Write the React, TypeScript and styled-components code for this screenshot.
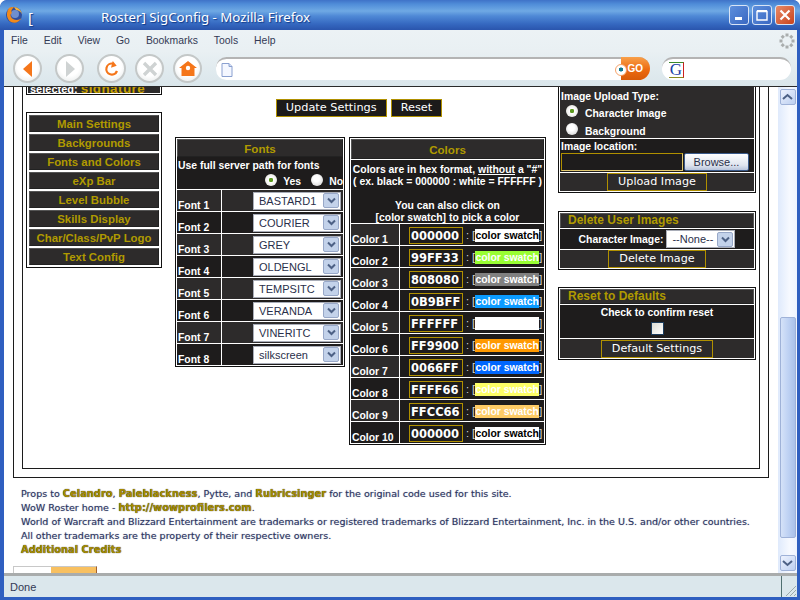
import React from 'react';
import styled, { createGlobalStyle } from 'styled-components';

const fontRows = ['BASTARD1', 'COURIER', 'GREY', 'OLDENGL', 'TEMPSITC', 'VERANDA', 'VINERITC', 'silkscreen'];

const colorRows = [
  { value: '000000', color: '#ffffff', text: '#000000' },
  { value: '99FF33', color: '#99ff33', text: '#ffffff' },
  { value: '808080', color: '#808080', text: '#ffffff' },
  { value: '0B9BFF', color: '#0b9bff', text: '#ffffff' },
  { value: 'FFFFFF', color: '#ffffff', text: '#ffffff' },
  { value: 'FF9900', color: '#ff9900', text: '#ffffff' },
  { value: '0066FF', color: '#0066ff', text: '#ffffff' },
  { value: 'FFFF66', color: '#ffff66', text: '#ffffff' },
  { value: 'FFCC66', color: '#ffcc66', text: '#ffffff' },
  { value: '000000', color: '#ffffff', text: '#000000' },
];

const navItems = [
  'Main Settings',
  'Backgrounds',
  'Fonts and Colors',
  'eXp Bar',
  'Level Bubble',
  'Skills Display',
  'Char/Class/PvP Logo',
  'Text Config',
];

const menuItems = ['File', 'Edit', 'View', 'Go', 'Bookmarks', 'Tools', 'Help'];

const ChevronDown = (): React.ReactElement => (
  <svg width="9" height="7" viewBox="0 0 9 7">
    <path d="M1 1.5 L4.5 5 L8 1.5" fill="none" stroke="#4d6185" strokeWidth="2" />
  </svg>
);

const Select = ({ label }: { label: string }): React.ReactElement => (
  <SelectBox>
    <SelectText>{label}</SelectText>
    <SelectArrow>
      <ChevronDown />
    </SelectArrow>
  </SelectBox>
);

const App: React.FunctionComponent = (): React.ReactElement => (
  <Window>
    <GlobalStyle />
    <TitleBar>
      <svg width="18" height="18" viewBox="0 0 18 18">
        <circle cx="9" cy="9" r="8" fill="#2f4f9e" />
        <circle cx="10" cy="8" r="4" fill="#6f8fce" />
        <path d="M4 2 C1 6 1 13 6 16 C10 18 15 16 17 11 C16 14 11 15 8 13 C5 11 5 8 7 7 C6 5 6 4 9 1 C7 1 5 1 4 2 Z" fill="#f08a1c" />
        <path d="M9 1 C13 1 16 4 17 8 C15 5 13 4 11 4 Z" fill="#f6b23c" />
      </svg>
      <TitleLead>[</TitleLead>
      <TitleText>Roster] SigConfig - Mozilla Firefox</TitleText>
      <WindowButtons>
        <WindowButton>
          <svg width="10" height="10" viewBox="0 0 10 10"><rect x="1" y="7" width="7" height="3" fill="#fff" /></svg>
        </WindowButton>
        <WindowButton>
          <svg width="12" height="12" viewBox="0 0 12 12"><path d="M1 2.5H11V11H1Z" fill="none" stroke="#fff" strokeWidth="1.4" /><rect x="1" y="1" width="10" height="2" fill="#fff" /></svg>
        </WindowButton>
        <CloseButton>
          <svg width="12" height="12" viewBox="0 0 12 12"><path d="M1.5 1.5 L10.5 10.5 M10.5 1.5 L1.5 10.5" stroke="#fff" strokeWidth="2.2" /></svg>
        </CloseButton>
      </WindowButtons>
    </TitleBar>

    <MenuBar>
      {menuItems.map((item) => (
        <MenuItem key={item}>{item}</MenuItem>
      ))}
      <Throbber>
        <svg width="16" height="16" viewBox="0 0 16 16">
          {[0, 45, 90, 135, 180, 225, 270, 315].map((a) => (
            <rect key={a} x="6.5" y="0.5" width="3" height="3" fill="#a9adad" transform={`rotate(${a} 8 8)`} />
          ))}
        </svg>
      </Throbber>
    </MenuBar>

    <Toolbar>
      <NavButton $gap={0}>
        <svg width="16" height="18" viewBox="0 0 16 18"><path d="M12 1 L3 9 L12 17 Z" fill="#f5761a" /></svg>
      </NavButton>
      <NavButton $gap={13}>
        <svg width="16" height="18" viewBox="0 0 16 18"><path d="M4 1 L13 9 L4 17 Z" fill="#cfd3d3" /></svg>
      </NavButton>
      <NavButton $gap={13}>
        <svg width="18" height="18" viewBox="0 0 18 18">
          <path d="M14 11 A5.5 5.5 0 1 1 10 3.7" fill="none" stroke="#f5761a" strokeWidth="2.2" />
          <path d="M9 1 L14 4.5 L9 8 Z" fill="#f5761a" transform="rotate(15 9 4)" />
        </svg>
      </NavButton>
      <NavButton $gap={9}>
        <svg width="18" height="18" viewBox="0 0 18 18"><path d="M3 3 L15 15 M15 3 L3 15" stroke="#cfd3d3" strokeWidth="3.4" /></svg>
      </NavButton>
      <NavButton $gap={9}>
        <svg width="20" height="18" viewBox="0 0 20 18">
          <path d="M10 1 L19 8 H16.5 V16 H3.5 V8 H1 Z" fill="#f5761a" />
          <circle cx="10" cy="8" r="2.2" fill="#fff" />
        </svg>
      </NavButton>
      <AddressBar>
        <svg width="12" height="14" viewBox="0 0 12 14">
          <path d="M1 .5H8L11 3.5V13.5H1Z" fill="#f4f7ff" stroke="#8aa0d0" />
          <path d="M8 .5V3.5H11" fill="#d3def5" stroke="#8aa0d0" />
        </svg>
        <GoButton>
          <GoDrop />
          GO
        </GoButton>
      </AddressBar>
      <SearchBar>
        <SearchLogo>
          <SearchLetter>G</SearchLetter>
        </SearchLogo>
      </SearchBar>
    </Toolbar>

    <Viewport>
      <Page>
        <OuterBox>
          <InnerBox>
            <LeftColumn>
              <SelectedBox>
                selected: <SelectedName>signature</SelectedName>
              </SelectedBox>
              <NavBox>
                {navItems.map((item) => (
                  <NavItem key={item}>{item}</NavItem>
                ))}
              </NavBox>
            </LeftColumn>

            <MiddleColumn>
              <ActionRow>
                <ActionButton>Update Settings</ActionButton>
                <ActionButton>Reset</ActionButton>
              </ActionRow>
              <PanelRow>
                <FontsPanel>
                  <PanelHeader $height={18}>Fonts</PanelHeader>
                  <FontsIntro>
                    Use full server path for fonts
                    <RadioLine>
                      <Radio $checked />
                      <RadioCaption>Yes</RadioCaption>
                      <Radio />
                      <RadioCaption>No</RadioCaption>
                    </RadioLine>
                  </FontsIntro>
                  {fontRows.map((name, index) => (
                    <FontRow key={name} $odd={index % 2 === 0}>
                      <RowLabel>Font {index + 1}</RowLabel>
                      <FontCell>
                        <Select label={name} />
                      </FontCell>
                    </FontRow>
                  ))}
                </FontsPanel>

                <ColorsPanel>
                  <PanelHeader $height={20}>Colors</PanelHeader>
                  <ColorsIntro>
                    Colors are in hex format, <u>without</u> a &quot;#&quot;
                    <br />( ex. black = 000000 : white = FFFFFF )
                    <br />
                    <br />
                    You can also click on
                    <br />
                    [color swatch] to pick a color
                  </ColorsIntro>
                  {colorRows.map((row, index) => (
                    <ColorRow key={index} $odd={index % 2 === 0}>
                      <ColorLabel>Color {index + 1}</ColorLabel>
                      <ColorCell>
                        <HexInput>{row.value}</HexInput>
                        <SwatchLink>
                          : [
                          <Swatch style={{ background: row.color, color: row.text }}>color swatch</Swatch>]
                        </SwatchLink>
                      </ColorCell>
                    </ColorRow>
                  ))}
                </ColorsPanel>
              </PanelRow>
            </MiddleColumn>

            <RightColumn>
              <SidePanel $top={0}>
                <UploadTypes>
                  Image Upload Type:
                  <UploadOptions>
                    <UploadOption>
                      <UploadRadio $checked />
                      Character Image
                    </UploadOption>
                    <UploadOption>
                      <UploadRadio />
                      Background
                    </UploadOption>
                  </UploadOptions>
                </UploadTypes>
                <LocationRow>
                  Image location:
                  <FileLine>
                    <FileInput />
                    <BrowseButton>Browse...</BrowseButton>
                  </FileLine>
                </LocationRow>
                <ButtonRow $height={19}>
                  <GoldButton>Upload Image</GoldButton>
                </ButtonRow>
              </SidePanel>

              <SidePanel $top={18}>
                <SideHeader>Delete User Images</SideHeader>
                <DeleteRow>
                  Character Image:
                  <SmallSelect>
                    <SelectText>--None--</SelectText>
                    <SelectArrow>
                      <ChevronDown />
                    </SelectArrow>
                  </SmallSelect>
                </DeleteRow>
                <ButtonRow $height={19}>
                  <GoldButton>Delete Image</GoldButton>
                </ButtonRow>
              </SidePanel>

              <SidePanel $top={17}>
                <SideHeader>Reset to Defaults</SideHeader>
                <ConfirmRow>
                  Check to confirm reset
                  <CheckBox />
                </ConfirmRow>
                <ButtonRow $height={20}>
                  <GoldButton>Default Settings</GoldButton>
                </ButtonRow>
              </SidePanel>
            </RightColumn>
          </InnerBox>
        </OuterBox>

        <Footer>
          <FooterLine>
            Props to <FooterLink>Celandro</FooterLink>, <FooterLink>Paleblackness</FooterLink>, Pytte, and{' '}
            <FooterLink>Rubricsinger</FooterLink> for the original code used for this site.
          </FooterLine>
          <FooterLine>
            WoW Roster home - <FooterLink>http://wowprofilers.com</FooterLink>.
          </FooterLine>
          <FooterLine>
            World of Warcraft and Blizzard Entertainment are trademarks or registered trademarks of Blizzard Entertainment, Inc. in the U.S. and/or other countries.
          </FooterLine>
          <FooterLine>All other trademarks are the property of their respective owners.</FooterLine>
          <FooterLine>
            <FooterLink>Additional Credits</FooterLink>
          </FooterLine>
        </Footer>
        <Badge>
          <BadgeEnd />
        </Badge>
      </Page>

      <ScrollBar>
        <ScrollButton>
          <svg width="11" height="8" viewBox="0 0 11 8"><path d="M1 6 L5.5 2 L10 6" fill="none" stroke="#4d6185" strokeWidth="2" /></svg>
        </ScrollButton>
        <ScrollTrack>
          <ScrollThumb />
        </ScrollTrack>
        <ScrollButton>
          <svg width="11" height="8" viewBox="0 0 11 8"><path d="M1 2 L5.5 6 L10 2" fill="none" stroke="#4d6185" strokeWidth="2" /></svg>
        </ScrollButton>
      </ScrollBar>
    </Viewport>

    <StatusBar>
      <StatusText>Done</StatusText>
      <Grip>
        <svg width="14" height="14" viewBox="0 0 14 14">
          <path d="M13 3 L3 13 M13 7 L7 13 M13 11 L11 13" stroke="#9aa8aa" strokeWidth="1" />
        </svg>
      </Grip>
    </StatusBar>
  </Window>
);

export default App;

// Global

const GlobalStyle = createGlobalStyle`
  html, body {
    margin: 0;
    padding: 0;
    background: #fff;
    overflow: hidden;
  }
`;

// Browser chrome

const Window = styled('div')`
  box-sizing: border-box;
  display: flex;
  flex-direction: column;
  width: 800px;
  height: 600px;
  overflow: hidden;
  background: #2f5fc0;
  border-radius: 7px 7px 0 0;
  padding: 0 3px 3px 4px;
  font-family: "Noto Sans", sans-serif;
`;

const TitleBar = styled('div')`
  display: flex;
  align-items: center;
  flex: none;
  height: 30px;
  margin: 0 -3px 0 -4px;
  padding: 0 5px;
  background: linear-gradient(#3f72c8 0, #4f8cd8 4px, #6fa9e4 11px, #4f89d6 16px, #3568c0 24px, #2a55ad 30px);
  border-radius: 7px 7px 0 0;
`;

const TitleLead = styled('span')`
  margin: 3px 0 0 5px;
  width: 73px;
  color: #fff;
  font-size: 15px;
  text-shadow: 1px 1px 1px #123a88;
`;

const TitleText = styled('span')`
  flex: 1;
  margin-top: 3px;
  color: #fff;
  font-size: 13.3px;
  text-shadow: 1px 1px 1px #123a88;
`;

const WindowButtons = styled('div')`
  display: flex;
  gap: 3px;
`;

const WindowButton = styled('div')`
  display: flex;
  align-items: center;
  justify-content: center;
  box-sizing: border-box;
  width: 20px;
  height: 20px;
  border: 1px solid #d8e4f6;
  border-radius: 3px;
  background: linear-gradient(135deg, #5d8fdc, #3a68c2);
`;

const CloseButton = styled(WindowButton)`
  background: linear-gradient(135deg, #e88a68, #c8431c);
`;

const MenuBar = styled('div')`
  display: flex;
  align-items: center;
  flex: none;
  gap: 16px;
  height: 21px;
  padding: 0 0 0 7px;
  background: linear-gradient(#ecf2f5, #e9f0f3);
  font-family: "Liberation Sans", sans-serif;
  font-size: 10.4px;
  color: #333a55;
`;

const MenuItem = styled('span')``;

const Throbber = styled('div')`
  display: flex;
  margin-left: auto;
  margin-right: 2px;
`;

const Toolbar = styled('div')`
  display: flex;
  align-items: center;
  flex: none;
  box-sizing: border-box;
  height: 36px;
  padding: 0 6px 0 9px;
  background: linear-gradient(#e9f0f3, #dae6eb);
  border-bottom: 1px solid #2a2a2a;
`;

const NavButton = styled('div')<{ $gap: number }>`
  display: flex;
  align-items: center;
  justify-content: center;
  box-sizing: border-box;
  flex: none;
  width: 29px;
  height: 29px;
  margin-left: ${(p) => p.$gap}px;
  border: 2px solid #c4c8c8;
  border-radius: 50%;
  background: radial-gradient(circle at 50% 40%, #ffffff 50%, #e2e6e6);
`;

const AddressBar = styled('div')`
  display: flex;
  align-items: center;
  justify-content: space-between;
  box-sizing: border-box;
  flex: none;
  width: 434px;
  height: 23px;
  margin-left: 14px;
  padding-left: 5px;
  background: #fff;
  border-top: 2px solid #b4b4b4;
  border-radius: 11px 12px 12px 11px;
`;

const GoButton = styled('div')`
  display: flex;
  align-items: center;
  justify-content: flex-end;
  position: relative;
  box-sizing: border-box;
  width: 29px;
  height: 23px;
  margin-top: -2px;
  padding-right: 7px;
  border-radius: 0 12px 12px 0;
  background: linear-gradient(#f8a04a, #ec6a10 55%, #d85a08);
  color: #fff;
  font-family: "Liberation Sans", sans-serif;
  font-size: 10px;
  font-weight: 700;
`;

const GoDrop = styled('span')`
  position: absolute;
  left: -6px;
  top: 7px;
  width: 10px;
  height: 10px;
  border: 1px solid #f6a46a;
  border-radius: 50%;
  background: radial-gradient(circle at 50% 45%, #107a90 25%, #fff 30%);
`;

const SearchBar = styled('div')`
  display: flex;
  align-items: center;
  box-sizing: border-box;
  flex: none;
  width: 129px;
  height: 23px;
  margin-left: 12px;
  padding-left: 7px;
  background: #fff;
  border-top: 2px solid #b4b4b4;
  border-radius: 11px;
`;

const SearchLogo = styled('div')`
  display: flex;
  align-items: center;
  justify-content: center;
  box-sizing: border-box;
  width: 15px;
  height: 16px;
  border-top: 1px solid #3a8a2a;
  border-right: 1px solid #cc2020;
  border-bottom: 1px solid #8a8a20;
`;

const SearchLetter = styled('span')`
  color: #1a3fa8;
  font-family: "Liberation Serif", serif;
  font-size: 17px;
  line-height: 14px;
`;

const Viewport = styled('div')`
  display: flex;
  flex: 1;
  min-height: 0;
  background: #fff;
`;

const Page = styled('div')`
  flex: 1;
  min-width: 0;
  overflow: hidden;
  background: #fff;
`;

const ScrollBar = styled('div')`
  display: flex;
  flex-direction: column;
  align-items: center;
  flex: none;
  width: 19px;
  padding: 2px 0 2px;
  box-sizing: border-box;
  background: linear-gradient(90deg, #dfeafc, #f6f9ff 60%, #eef4ff);
`;

const ScrollButton = styled('div')`
  display: flex;
  align-items: center;
  justify-content: center;
  box-sizing: border-box;
  flex: none;
  width: 16px;
  height: 16px;
  border: 1px solid #9fb2d8;
  border-radius: 2px;
  background: linear-gradient(135deg, #eef3fe, #bccff0);
`;

const ScrollTrack = styled('div')`
  flex: 1;
  width: 100%;
  padding-top: 212px;
  box-sizing: border-box;
`;

const ScrollThumb = styled('div')`
  box-sizing: border-box;
  width: 16px;
  height: 221px;
  margin: 0 auto;
  border: 1px solid #9fb2d8;
  border-radius: 2px;
  background: linear-gradient(90deg, #d5e2f8, #bfd2f3 50%, #a9c1ea);
`;

const StatusBar = styled('div')`
  display: flex;
  align-items: center;
  justify-content: space-between;
  box-sizing: border-box;
  flex: none;
  height: 24px;
  border-top: 3px solid #a9acac;
  background: #dbe7ec;
  font-family: "Liberation Sans", sans-serif;
  font-size: 11px;
  color: #333a55;
`;

const StatusText = styled('span')`
  padding-left: 6px;
`;

const Grip = styled('div')`
  display: flex;
  align-items: flex-end;
  justify-content: flex-end;
  box-sizing: border-box;
  width: 16px;
  height: 100%;
  border-left: 1px solid #4f6f70;
`;

// Page frames

const OuterBox = styled('div')`
  box-sizing: border-box;
  width: 756px;
  margin: -31px 0 0 9px;
  padding: 8px;
  border: 1px solid #1c1c1c;
`;

const InnerBox = styled('div')`
  display: flex;
  align-items: flex-start;
  box-sizing: border-box;
  padding: 3px 3px 23px;
  border: 1px solid #1c1c1c;
  font-family: "Liberation Sans", sans-serif;
`;

const LeftColumn = styled('div')`
  display: flex;
  flex-direction: column;
  flex: none;
  width: 136px;
  gap: 17px;
`;

const SelectedBox = styled('div')`
  box-sizing: border-box;
  height: 26px;
  padding: 11px 2px 0 3px;
  background: #2d2b2b;
  border: 1px solid #111;
  outline: 1px solid #fff;
  outline-offset: -2px;
  color: #fff;
  font-size: 11px;
  font-weight: 700;
  white-space: nowrap;
  overflow: hidden;
`;

const SelectedName = styled('span')`
  color: #c8a000;
  font-size: 13.5px;
  letter-spacing: 0.4px;
`;

const NavBox = styled('div')`
  display: flex;
  flex-direction: column;
  gap: 2px;
  padding: 2px;
  border: 1px solid #111;
`;

const NavItem = styled('div')`
  box-sizing: border-box;
  height: 17px;
  background: #2d2b2b;
  border: 1px solid #555;
  border-bottom-color: #222;
  border-right-color: #222;
  color: #b09a00;
  font-size: 11.4px;
  font-weight: 700;
  line-height: 16px;
  text-align: center;
  white-space: nowrap;
`;

const MiddleColumn = styled('div')`
  display: flex;
  flex-direction: column;
  flex: none;
  width: 371px;
  margin-left: 13px;
`;

const ActionRow = styled('div')`
  display: flex;
  justify-content: center;
  gap: 4px;
  height: 18px;
  margin: 30px 0 20px -3px;
`;

const ActionButton = styled('div')`
  box-sizing: border-box;
  padding: 0 9px;
  height: 18px;
  background: #1c1a1a;
  border: 1px solid #b09000;
  color: #fff;
  font-family: "DejaVu Sans", sans-serif;
  font-size: 11.3px;
  line-height: 16px;
  white-space: nowrap;
`;

const PanelRow = styled('div')`
  display: flex;
  align-items: flex-start;
  justify-content: space-between;
`;

const Panel = styled('div')`
  box-sizing: border-box;
  background: #fff;
  border: 1px solid #111;
  padding: 1px;
  color: #fff;
  font-size: 10.4px;
  font-weight: 700;
`;

const FontsPanel = styled(Panel)`
  width: 170px;
`;

const ColorsPanel = styled(Panel)`
  width: 197px;
`;

const PanelHeader = styled('div')<{ $height: number }>`
  box-sizing: border-box;
  height: ${(p) => p.$height}px;
  background: #2d2b2b;
  border: 1px solid #555;
  border-bottom-color: #222;
  border-right-color: #222;
  color: #b09a00;
  font-size: 11.6px;
  line-height: ${(p) => p.$height}px;
  text-align: center;
`;

const FontsIntro = styled('div')`
  box-sizing: border-box;
  height: 32px;
  padding: 3px 0 0 1px;
  background: #1e1c1c;
  white-space: nowrap;
`;

const RadioLine = styled('div')`
  display: flex;
  align-items: center;
  justify-content: flex-end;
  margin-top: 2px;
`;

const Radio = styled('span')<{ $checked?: boolean }>`
  display: inline-block;
  box-sizing: border-box;
  flex: none;
  width: 12px;
  height: 12px;
  border-radius: 50%;
  background: ${(p) =>
    p.$checked
      ? 'radial-gradient(circle, #5d9a20 22%, #ffffff 30%, #dcdcd4)'
      : 'radial-gradient(circle at 45% 40%, #ffffff 30%, #c9c9c9)'};
`;

const RadioCaption = styled('span')`
  margin: 3px 0 0 6px;
  padding-right: 10px;
  &:last-child {
    padding-right: 0;
  }
`;

const FontRow = styled('div')<{ $odd: boolean }>`
  display: flex;
  box-sizing: border-box;
  height: 22px;
  border-top: 1px solid #fff;
  background: ${(p) => (p.$odd ? '#2d2b2b' : '#1e1c1c')};
`;

const RowLabel = styled('div')`
  display: flex;
  align-items: flex-end;
  box-sizing: border-box;
  flex: none;
  width: 45px;
  padding: 0 0 0 1px;
  border-right: 1px solid #fff;
  background: inherit;
`;

const FontCell = styled('div')`
  display: flex;
  flex: 1;
  align-items: center;
  justify-content: flex-end;
  padding-right: 2px;
`;

const SelectBox = styled('div')`
  display: flex;
  align-items: center;
  justify-content: space-between;
  box-sizing: border-box;
  width: 88px;
  height: 18px;
  padding: 0 1px 0 5px;
  background: #fff;
  border: 1px solid #a9adb8;
  font-weight: 400;
`;

const SelectText = styled('span')`
  color: #2a2f4a;
  font-family: "Liberation Sans", sans-serif;
  font-size: 11px;
  font-weight: 400;
  white-space: nowrap;
`;

const SelectArrow = styled('span')`
  display: flex;
  align-items: center;
  justify-content: center;
  box-sizing: border-box;
  flex: none;
  width: 16px;
  height: 15px;
  border: 1px solid #98a8c8;
  border-radius: 2px;
  background: #c3d2ea;
`;

const ColorsIntro = styled('div')`
  box-sizing: border-box;
  height: 64px;
  padding-top: 4px;
  border-top: 1px solid #fff;
  background: #1e1c1c;
  line-height: 12px;
  text-align: center;
  white-space: nowrap;
`;

const ColorRow = styled('div')<{ $odd: boolean }>`
  display: flex;
  box-sizing: border-box;
  height: 22px;
  border-top: 1px solid #fff;
  background: ${(p) => (p.$odd ? '#2d2b2b' : '#1e1c1c')};
`;

const ColorLabel = styled(RowLabel)`
  width: 49px;
`;

const ColorCell = styled('div')`
  display: flex;
  flex: 1;
  align-items: center;
  padding: 1px 0 0 9px;
  background: #1e1c1c;
`;

const HexInput = styled('div')`
  box-sizing: border-box;
  flex: none;
  width: 54px;
  height: 17px;
  padding-left: 1px;
  background: #1e1c1c;
  border: 1px solid #b09000;
  color: #fff;
  font-family: "DejaVu Sans", sans-serif;
  font-size: 11.5px;
  font-weight: 700;
  line-height: 16px;
`;

const SwatchLink = styled('div')`
  display: flex;
  align-items: center;
  margin-left: 3px;
  color: #d8d8d8;
  font-family: "Liberation Sans", sans-serif;
  font-size: 11px;
  font-weight: 400;
  white-space: pre;
`;

const Swatch = styled('span')`
  flex: none;
  width: 64px;
  height: 13px;
  font-size: 10.4px;
  font-weight: 700;
  line-height: 13px;
  text-align: center;
  overflow: hidden;
`;

// Right column

const RightColumn = styled('div')`
  display: flex;
  flex-direction: column;
  flex: none;
  width: 198px;
  margin-left: 12px;
`;

const SidePanel = styled(Panel)<{ $top: number }>`
  width: 198px;
  margin-top: ${(p) => p.$top}px;
`;

const UploadTypes = styled('div')`
  box-sizing: border-box;
  height: 67px;
  padding: 20px 0 0 1px;
  background: #2d2b2b;
  white-space: nowrap;
`;

const UploadOptions = styled('div')`
  margin-top: 2px;
`;

const UploadOption = styled('div')`
  display: flex;
  align-items: center;
  gap: 7px;
  height: 18px;
  padding-left: 5px;
`;

const UploadRadio = styled(Radio)`
  margin-top: -4px;
`;

const LocationRow = styled('div')`
  box-sizing: border-box;
  height: 34px;
  padding: 2px 0 0 1px;
  border-top: 1px solid #fff;
  background: #1e1c1c;
`;

const FileLine = styled('div')`
  display: flex;
  gap: 1px;
  margin-top: 1px;
`;

const FileInput = styled('div')`
  box-sizing: border-box;
  width: 122px;
  height: 18px;
  background: #1e1c1c;
  border: 1px solid #b09000;
  border-bottom-color: #e0c870;
  border-right-color: #e0c870;
`;

const BrowseButton = styled('div')`
  box-sizing: border-box;
  width: 65px;
  height: 18px;
  border: 1px solid #3a5a8a;
  border-radius: 2px;
  background: linear-gradient(#ffffff, #dfe4ee 70%, #b8c4dc);
  color: #2a2f4a;
  font-size: 11px;
  font-weight: 400;
  line-height: 16px;
  text-align: center;
`;

const ButtonRow = styled('div')<{ $height: number }>`
  display: flex;
  align-items: center;
  justify-content: center;
  box-sizing: border-box;
  height: ${(p) => p.$height}px;
  border-top: 1px solid #fff;
  background: #2d2b2b;
`;

const GoldButton = styled('div')`
  box-sizing: border-box;
  height: 18px;
  padding: 0 10px;
  background: #2d2b2b;
  border: 1px solid #b09000;
  color: #fff;
  font-family: "DejaVu Sans", sans-serif;
  font-size: 11.2px;
  font-weight: 400;
  line-height: 16px;
  white-space: nowrap;
`;

const SideHeader = styled('div')`
  box-sizing: border-box;
  height: 15px;
  padding-left: 7px;
  background: #2d2b2b;
  border: 1px solid #555;
  border-bottom-color: #222;
  color: #b09a00;
  font-size: 12px;
  line-height: 13px;
`;

const DeleteRow = styled('div')`
  display: flex;
  align-items: center;
  justify-content: center;
  gap: 3px;
  box-sizing: border-box;
  height: 21px;
  border-top: 1px solid #fff;
  background: #1e1c1c;
`;

const SmallSelect = styled(SelectBox)`
  width: 69px;
`;

const ConfirmRow = styled('div')`
  display: flex;
  flex-direction: column;
  align-items: center;
  gap: 4px;
  box-sizing: border-box;
  height: 34px;
  padding-top: 2px;
  border-top: 1px solid #fff;
  background: #1e1c1c;
`;

const CheckBox = styled('span')`
  box-sizing: border-box;
  width: 13px;
  height: 13px;
  border: 1px solid #1c3c5c;
  background: linear-gradient(135deg, #dcdcd4, #ffffff);
`;

// Footer

const Footer = styled('div')`
  margin: 9px 0 0 17px;
  color: #2c3560;
  font-family: "DejaVu Sans", sans-serif;
  font-size: 9.55px;
  line-height: 14px;
  text-shadow: 0 0 1px rgba(40, 50, 110, 0.5);
`;

const FooterLine = styled('div')`
  white-space: nowrap;
`;

const FooterLink = styled('span')`
  color: #a88c00;
  font-size: 9.9px;
  font-weight: 700;
  text-shadow: 0 0 1px #000;
`;

const Badge = styled('div')`
  display: flex;
  justify-content: flex-end;
  box-sizing: border-box;
  width: 84px;
  height: 20px;
  margin: 9px 0 0 9px;
  border: 1px solid #c8c8c8;
  border-right-color: #a06030;
`;

const BadgeEnd = styled('div')`
  width: 45px;
  background: #f8c060;
`;
